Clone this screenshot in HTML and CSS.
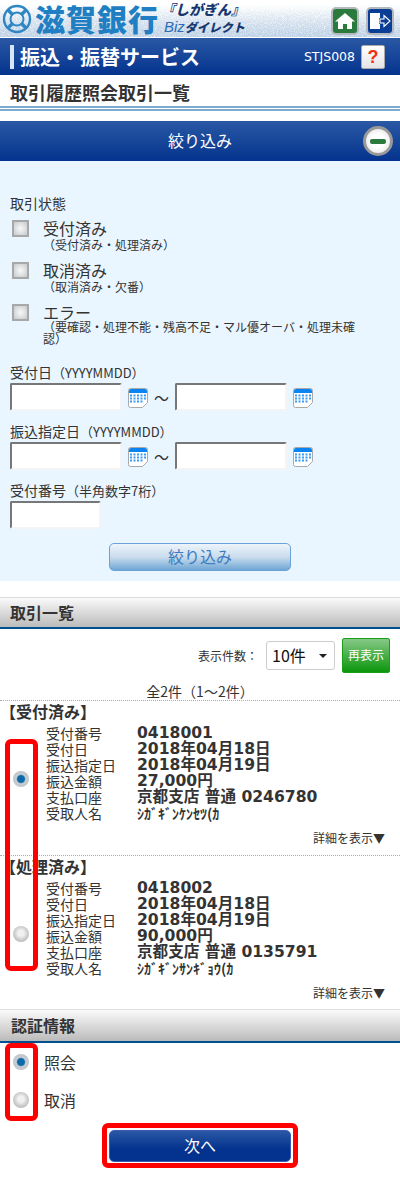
FILE: index.html
```html
<!DOCTYPE html>
<html lang="ja">
<head>
    <meta charset="UTF-8">
    <meta name="viewport" content="width=device-width, initial-scale=1.0">
    <title>取引履歴照会取引一覧</title>
    <link rel="stylesheet" href="styles.css">
</head>
<body>

    <header class="brand">
        <svg class="brand-noise" width="400" height="37">
            <defs>
                <filter id="speckle">
                    <feTurbulence type="fractalNoise" baseFrequency="0.9" numOctaves="2" seed="4"/>
                    <feColorMatrix type="matrix" values="0 0 0 0 0.5  0 0 0 0 0.63  0 0 0 0 0.78  2.4 2.4 0 0 -1.6"/>
                </filter>
                <linearGradient id="fade" x1="0" y1="0" x2="0" y2="1">
                    <stop offset="0.1" stop-color="#000"/>
                    <stop offset="1" stop-color="#fff"/>
                </linearGradient>
                <mask id="fadeMask"><rect width="400" height="37" fill="url(#fade)"/></mask>
            </defs>
            <g mask="url(#fadeMask)"><rect width="400" height="37" filter="url(#speckle)"/></g>
        </svg>
        <svg class="emblem" width="30" height="30" viewBox="0 0 30 30">
            <circle cx="15" cy="15" r="13" fill="none" stroke="#2f86c4" stroke-width="2.4"/>
            <circle cx="15" cy="15" r="6.5" fill="none" stroke="#2f86c4" stroke-width="2"/>
            <path d="M6 6l5 5M24 6l-5 5M6 24l5-5M24 24l-5-5" stroke="#2f86c4" stroke-width="3.4"/>
        </svg>
        <div class="bank-name">滋賀銀行</div>
        <div class="service-name">
            <div class="service-top">『しがぎん』</div>
            <div class="service-bottom"><span class="biz">Biz</span>ダイレクト</div>
        </div>
        <div class="brand-btns">
            <span class="icon-btn icon-home">
                <svg width="20" height="18" viewBox="0 0 20 18"><path d="M10 1L0 9.5h3V17h5v-5h4v5h5V9.5h3z" fill="#fff"/></svg>
            </span>
            <span class="icon-btn icon-exit">
                <svg width="22" height="20" viewBox="0 0 22 20"><path d="M1 2h10v5h-1v6h1v5H1z" fill="#fff"/><path d="M11 8h4V4.500l6 5.500-6 5.500V12h-4z" fill="none" stroke="#fff" stroke-width="1.100"/></svg>
            </span>
        </div>
    </header>

    <div class="title-bar">
        <span class="title-mark"></span>
        <h1 class="title-text">振込・振替サービス</h1>
        <span class="screen-id">STJS008</span>
        <span class="help-btn">?</span>
    </div>

    <h2 class="page-title">取引履歴照会取引一覧</h2>

    <div class="filter-bar">
        絞り込み
        <span class="minus-btn"><span class="minus-mark"></span></span>
    </div>

    <section class="filter">
        <div class="filter-label">取引状態</div>

        <div class="status-row">
            <span class="check"></span>
            <div>
                <div class="status-name">受付済み</div>
                <div class="status-note">（受付済み・処理済み）</div>
            </div>
        </div>
        <div class="status-row">
            <span class="check"></span>
            <div>
                <div class="status-name">取消済み</div>
                <div class="status-note">（取消済み・欠番）</div>
            </div>
        </div>
        <div class="status-row">
            <span class="check"></span>
            <div>
                <div class="status-name">エラー</div>
                <div class="status-note status-note-wrap">（要確認・処理不能・残高不足・マル優オーバ・処理未確認）</div>
            </div>
        </div>

        <div class="date-label date-label-first">受付日<span class="hint">（YYYYMMDD）</span></div>
        <div class="date-row">
            <input class="text-input" type="text">
            <svg class="cal" width="20" height="20" viewBox="0 0 20 20"><use href="#calendar"/></svg>
            <span class="tilde">〜</span>
            <input class="text-input" type="text">
            <svg class="cal" width="20" height="20" viewBox="0 0 20 20"><use href="#calendar"/></svg>
        </div>

        <div class="date-label">振込指定日<span class="hint">（YYYYMMDD）</span></div>
        <div class="date-row">
            <input class="text-input" type="text">
            <svg class="cal" width="20" height="20" viewBox="0 0 20 20"><use href="#calendar"/></svg>
            <span class="tilde">〜</span>
            <input class="text-input" type="text">
            <svg class="cal" width="20" height="20" viewBox="0 0 20 20"><use href="#calendar"/></svg>
        </div>

        <div class="date-label">受付番号<span class="hint">（半角数字7桁）</span></div>
        <input class="text-input text-input-short" type="text">

        <div class="filter-action"><span class="filter-btn">絞り込み</span></div>
    </section>

    <div class="section-head section-head-list">取引一覧</div>

    <div class="toolbar">
        <span class="per-page">表示件数：</span>
        <span class="select-box">10件<span class="select-arrow"></span></span>
        <span class="refresh-btn">再表示</span>
    </div>
    <div class="count">全2件（1〜2件）</div>

    <div class="list">
        <article class="item">
            <div class="item-status">【受付済み】</div>
            <div class="item-body">
                <span class="radio radio-on"></span>
                <dl class="fields">
                    <dt>受付番号</dt><dd>0418001</dd>
                    <dt>受付日</dt><dd>2018年04月18日</dd>
                    <dt>振込指定日</dt><dd>2018年04月19日</dd>
                    <dt>振込金額</dt><dd>27,000円</dd>
                    <dt>支払口座</dt><dd>京都支店 普通 0246780</dd>
                    <dt>受取人名</dt><dd class="kana">ｼｶﾞｷﾞﾝｹﾝｾﾂ(ｶ</dd>
                </dl>
            </div>
            <div class="detail">詳細を表示▼</div>
        </article>
        <article class="item item-last">
            <div class="item-status">【処理済み】</div>
            <div class="item-body">
                <span class="radio"></span>
                <dl class="fields">
                    <dt>受付番号</dt><dd>0418002</dd>
                    <dt>受付日</dt><dd>2018年04月18日</dd>
                    <dt>振込指定日</dt><dd>2018年04月19日</dd>
                    <dt>振込金額</dt><dd>90,000円</dd>
                    <dt>支払口座</dt><dd>京都支店 普通 0135791</dd>
                    <dt>受取人名</dt><dd class="kana">ｼｶﾞｷﾞﾝｻﾝｷﾞｮｳ(ｶ</dd>
                </dl>
            </div>
            <div class="detail">詳細を表示▼</div>
        </article>
        <span class="mark mark-items"></span>
    </div>

    <div class="section-head section-head-auth">認証情報</div>

    <div class="auth">
        <div class="auth-row"><span class="radio radio-on"></span>照会</div>
        <div class="auth-row"><span class="radio"></span>取消</div>
        <span class="mark mark-auth"></span>
    </div>

    <div class="next-wrap">
        <span class="next-btn">次へ</span>
        <span class="mark mark-next"></span>
    </div>

    <svg width="0" height="0" class="defs">
        <symbol id="calendar" viewBox="0 0 20 20">
            <path d="M0.500 2.500a2 2 0 0 1 2-2h15a2 2 0 0 1 2 2v12l-5 5h-12a2 2 0 0 1-2-2z" fill="#fff" stroke="#a9a9a9"/>
            <path d="M1 3a2 2 0 0 1 2-2h14a2 2 0 0 1 2 2v2H1z" fill="#0a84f0"/>
            <path d="M2 7.500h16M2 10.500h16M2 13.500h14" stroke="#3a9cf5" stroke-width="2" stroke-dasharray="2 1.500"/>
        </symbol>
    </svg>

</body>
</html>
```
FILE: styles.css
```css
* {
    box-sizing: border-box;
}
body {
    margin: 0;
    background-color: #fff;
    color: #333;
    font-family: "Noto Sans CJK JP", "Liberation Sans", sans-serif;
    font-size: 14px;
}
h1, h2, dl, dd {
    margin: 0;
}
.defs {
    display: block;
    height: 0;
}

/* brand header */
.brand {
    position: relative;
    display: flex;
    align-items: center;
    height: 37px;
    padding-left: 2px;
    background: linear-gradient(to bottom, #fff 25%, #dfe8f1 100%);
}
.brand-noise {
    position: absolute;
    left: 0;
    top: 0;
}
.emblem {
    position: relative;
    flex: none;
}
.bank-name {
    position: relative;
    width: 126px;
    margin-left: 3px;
    color: #1f7fc2;
    font-size: 30px;
    font-weight: 900;
    line-height: 37px;
    letter-spacing: 1px;
    white-space: nowrap;
}
.service-name {
    position: relative;
    width: 84px;
    margin-left: 3px;
    color: #17376f;
    font-weight: 900;
    white-space: nowrap;
}
.service-top {
    margin-left: -3px;
    font-size: 14px;
    font-style: italic;
    line-height: 15px;
}
.service-bottom {
    font-size: 12px;
    font-style: italic;
    line-height: 19px;
}
.biz {
    color: #2a6cb8;
    font-family: "Liberation Sans", sans-serif;
    font-size: 15px;
    font-weight: 400;
}
.brand-btns {
    position: absolute;
    right: 6px;
    top: 7px;
    display: flex;
    gap: 7px;
}
.icon-btn {
    display: flex;
    align-items: center;
    justify-content: center;
    width: 28px;
    height: 28px;
    border: 2px solid #b5b9bd;
    border-radius: 5px;
}
.icon-home {
    background-color: #2b7a3d;
}
.icon-exit {
    background-color: #0a3d96;
}

/* title bar */
.title-bar {
    display: flex;
    align-items: center;
    height: 37px;
    margin-top: 1px;
    padding: 0 15px 0 10px;
    background: linear-gradient(to bottom, #2a58a4, #04338f);
    color: #fff;
}
.title-mark {
    width: 4px;
    height: 24px;
    margin-right: 6px;
    background-color: #d6e6f6;
}
.title-text {
    flex: 1;
    font-size: 20px;
    font-weight: 700;
    line-height: 24px;
}
.screen-id {
    margin-right: 6px;
    font-family: "DejaVu Sans", sans-serif;
    font-size: 12.5px;
}
.help-btn {
    width: 24px;
    height: 24px;
    border: 1px solid #aaa;
    border-radius: 2px;
    background: linear-gradient(to bottom, #fff, #e4e4e4);
    color: #f03010;
    font-family: "Liberation Sans", sans-serif;
    font-size: 18px;
    font-weight: 700;
    line-height: 22px;
    text-align: center;
}

/* page title */
.page-title {
    height: 36px;
    padding: 4px 10px 0;
    border-bottom: 5px double #7eabd0;
    color: #333;
    font-size: 18px;
    font-weight: 700;
    line-height: 27px;
}

/* filter */
.filter-bar {
    position: relative;
    height: 40px;
    margin-top: 10px;
    background: linear-gradient(to bottom, #2a58a4, #04338f);
    color: #fff;
    font-size: 16px;
    line-height: 39px;
    text-align: center;
}
.minus-btn {
    position: absolute;
    right: 7px;
    top: 5px;
    display: flex;
    align-items: center;
    justify-content: center;
    width: 30px;
    height: 30px;
    border: 3px solid #999;
    border-radius: 50%;
    background: radial-gradient(circle, #fff 40%, #dcdcdc);
}
.minus-mark {
    width: 16px;
    height: 5px;
    border-radius: 2px;
    background-color: #2b7a3d;
}
.filter {
    height: 420px;
    padding: 33px 10px 0;
    background-color: #eaf6ff;
}
.filter-label {
    font-size: 14px;
    line-height: 18px;
}
.status-row {
    display: flex;
    width: 352px;
    margin-top: 7px;
    margin-bottom: 8px;
}
.check {
    flex: none;
    width: 17px;
    height: 17px;
    margin: 1px 14px 0 2px;
    border: 2px solid #a8a8a8;
    background: radial-gradient(circle, #f8f8f8, #c6cacd);
}
.status-name {
    font-size: 16px;
    line-height: 18px;
}
.status-note {
    font-size: 12px;
    line-height: 16px;
}
.status-note-wrap {
    line-height: 12px;
}
.date-label {
    height: 18px;
    margin-top: 11px;
    margin-bottom: 2px;
    font-size: 14px;
    line-height: 18px;
}
.date-label-first {
    margin-top: 18px;
}
.hint {
    font-size: 13px;
}
.date-row {
    display: flex;
    align-items: center;
    height: 28px;
    margin-bottom: 11px;
}
.text-input {
    display: block;
    width: 112px;
    height: 28px;
    padding: 0;
    border: 2px solid;
    border-color: #777 #f4f4f4 #f4f4f4 #777;
    border-radius: 2px;
    background-color: #fff;
}
.text-input-short {
    width: 91px;
}
.cal {
    flex: none;
    margin: 2px 0 0 6px;
}
.tilde {
    width: 27px;
    font-size: 15px;
    text-align: center;
}
.filter-action {
    display: flex;
    justify-content: center;
    margin-top: 14px;
}
.filter-btn {
    width: 182px;
    height: 28px;
    border: 1px solid #6ba3d6;
    border-radius: 5px;
    background: linear-gradient(to bottom, #eef4fa, #c9dced 50%, #6ea6d5);
    color: #3c7cc0;
    font-size: 16px;
    line-height: 25px;
    text-align: center;
}

/* section heads */
.section-head {
    height: 32px;
    padding-left: 10px;
    border-top: 1px solid #ddd;
    border-bottom: 2px solid #00508f;
    background: linear-gradient(to bottom, #fafafa, #bbb);
    color: #333;
    font-size: 16px;
    font-weight: 700;
    line-height: 28px;
}
.section-head-list {
    margin-top: 16px;
}
.section-head-auth {
    height: 34px;
    padding-left: 11px;
    line-height: 30px;
}

/* list */
.toolbar {
    display: flex;
    align-items: center;
    justify-content: flex-end;
    height: 35px;
    margin-top: 9px;
    padding-right: 10px;
}
.per-page {
    margin-right: 8px;
    font-size: 12px;
}
.select-box {
    position: relative;
    width: 69px;
    height: 29px;
    margin-right: 7px;
    padding-left: 5px;
    border: 1px solid #ccc;
    border-radius: 3px;
    background-color: #fff;
    color: #111;
    font-size: 16px;
    line-height: 26px;
}
.select-arrow {
    position: absolute;
    right: 7px;
    top: 12px;
    border: 4px solid transparent;
    border-top: 4px solid #222;
}
.refresh-btn {
    width: 48px;
    height: 35px;
    border: 1px solid #18a018;
    border-radius: 2px;
    background: linear-gradient(to bottom, #86c886, #0c960c);
    color: #fff;
    font-size: 12px;
    line-height: 32px;
    text-align: center;
}
.count {
    height: 28px;
    border-bottom: 1px dotted #aaa;
    font-size: 14px;
    line-height: 36px;
    text-align: center;
}
.list {
    position: relative;
}
.item {
    height: 155px;
    border-bottom: 1px dotted #aaa;
}
.item-last {
    height: 153px;
    border-bottom: none;
}
.item-status {
    font-size: 16px;
    font-weight: 700;
    line-height: 21px;
}
.item-body {
    display: flex;
    align-items: center;
}
.radio {
    display: block;
    flex: none;
    width: 16px;
    height: 16px;
    border-radius: 50%;
    background: radial-gradient(circle at 50% 45%, #f0f0f0 25%, #c8c8c8 60%, #aaa 100%);
}
.radio-on {
    background: radial-gradient(circle, #0d6aa8 0, #0d6aa8 30%, #c8ced4 42%, #b4b8bc 100%);
}
.item .radio {
    margin: 15px 17px 0 13px;
}
.fields {
    display: grid;
    grid-template-columns: 91px 1fr;
    margin-top: 3px;
    font-size: 14px;
    line-height: 16px;
}
.fields dd {
    font-family: "DejaVu Sans", "Noto Sans CJK JP", sans-serif;
    font-size: 15.6px;
    font-weight: 700;
}
.fields .kana {
    font-family: "Noto Sans CJK JP", sans-serif;
    font-size: 14px;
}
.detail {
    margin-top: 9px;
    padding-right: 15px;
    font-size: 12px;
    line-height: 16px;
    text-align: right;
}

/* auth */
.auth {
    position: relative;
    height: 80px;
}
.auth-row {
    display: flex;
    align-items: center;
    height: 38px;
    padding-left: 13px;
    font-size: 16px;
    line-height: 34px;
}
.auth-row .radio {
    margin-right: 15px;
}
.next-wrap {
    position: relative;
    display: flex;
    justify-content: center;
    padding: 7px 0 16px;
}
.next-btn {
    width: 182px;
    height: 32px;
    border: 1px solid #3b5bb5;
    border-radius: 5px;
    background: linear-gradient(to bottom, #2a58a4, #04338f 60%);
    color: #fff;
    font-size: 16px;
    line-height: 29px;
    text-align: center;
}

/* red highlight marks over the content */
.mark {
    position: absolute;
    border: 5px solid #f00;
    border-radius: 6px;
}
.mark-items {
    left: 5px;
    top: 38px;
    width: 33px;
    height: 232px;
}
.mark-auth {
    left: 5px;
    top: 0;
    width: 33px;
    height: 78px;
}
.mark-next {
    left: 102px;
    top: 0;
    width: 196px;
    height: 45px;
}
```
